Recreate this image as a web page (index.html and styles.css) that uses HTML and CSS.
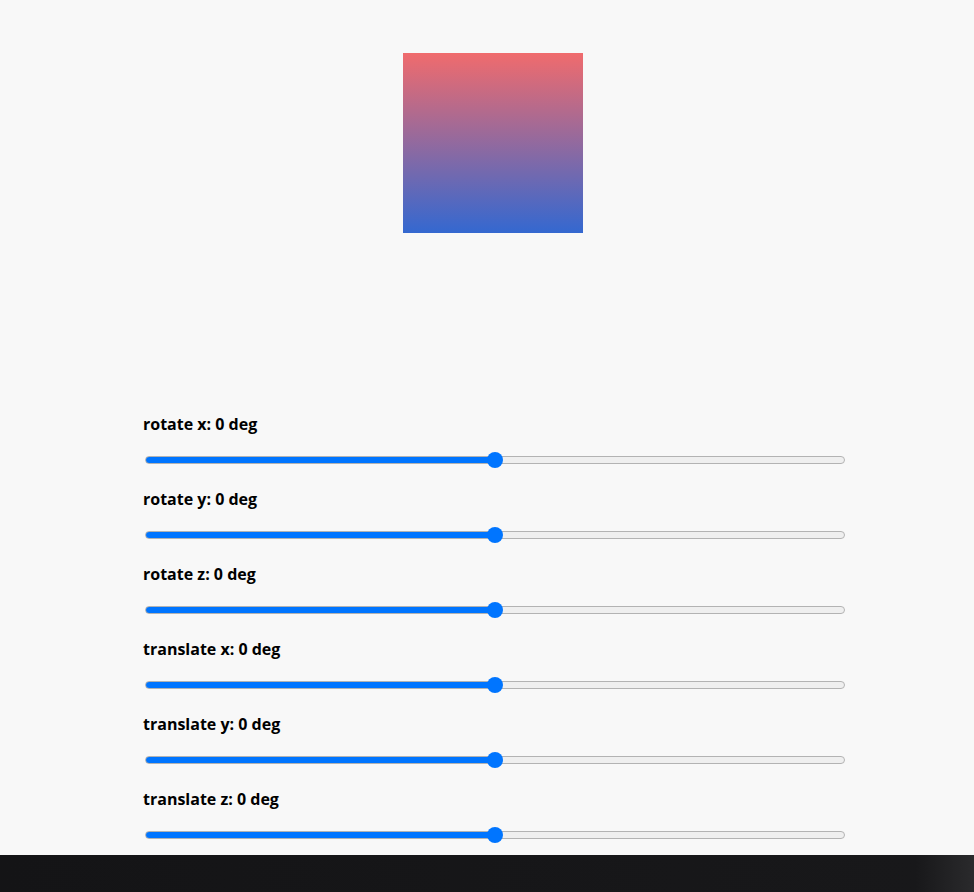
FILE: index.html
```html
<!DOCTYPE html>
<html lang="en">
<head>
<meta charset="utf-8">
<title>3D transform</title>
<link rel="stylesheet" href="styles.css">
</head>
<body>
<main class="page">
  <section class="stage">
    <div class="box"></div>
  </section>
  <section class="controls">
    <div class="control">
      <label class="label" for="rx">rotate x: 0 deg</label>
      <input class="range" id="rx" type="range" min="-180" max="180" value="0" style="--p:50%">
    </div>
    <div class="control">
      <label class="label" for="ry">rotate y: 0 deg</label>
      <input class="range" id="ry" type="range" min="-180" max="180" value="0" style="--p:50%">
    </div>
    <div class="control">
      <label class="label" for="rz">rotate z: 0 deg</label>
      <input class="range" id="rz" type="range" min="-180" max="180" value="0" style="--p:50%">
    </div>
    <div class="control">
      <label class="label" for="tx">translate x: 0 deg</label>
      <input class="range" id="tx" type="range" min="-180" max="180" value="0" style="--p:50%">
    </div>
    <div class="control">
      <label class="label" for="ty">translate y: 0 deg</label>
      <input class="range" id="ty" type="range" min="-180" max="180" value="0" style="--p:50%">
    </div>
    <div class="control">
      <label class="label" for="tz">translate z: 0 deg</label>
      <input class="range" id="tz" type="range" min="-180" max="180" value="0" style="--p:50%">
    </div>
  </section>
</main>
<div class="taskbar"></div>
</body>
</html>
```
FILE: styles.css
```css
html, body {
  margin: 0;
  padding: 0;
  background: #f8f8f8;
}
body {
  font-family: "Open Sans", "Noto Sans", sans-serif;
  color: #000;
}
.page {
  width: 704px;
  margin-left: 143px;
}
.stage {
  height: 415px;
  padding-top: 53px;
  box-sizing: border-box;
  display: flex;
}
.box {
  width: 180px;
  height: 180px;
  margin-left: 260px;
  background: linear-gradient(to bottom, #f06b6d, #3468d0);
}
.controls {
  display: flex;
  flex-direction: column;
}
.control {
  display: flex;
  flex-direction: column;
  height: 75px;
}
.label {
  font-size: 16px;
  font-weight: 700;
  line-height: 18px;
  height: 18px;
}
.range {
  -webkit-appearance: none;
  appearance: none;
  width: 700px;
  height: 8px;
  margin: 23px 2px 0;
  border-radius: 4px;
  border: 1px solid #b3b3b3;
  box-sizing: border-box;
  background: linear-gradient(to right, #0075ff var(--p), #efefef var(--p));
  outline: none;
}
.range::-webkit-slider-thumb {
  -webkit-appearance: none;
  appearance: none;
  width: 16px;
  height: 16px;
  border-radius: 50%;
  background: #0075ff;
  border: none;
}
.taskbar {
  position: fixed;
  left: 0;
  right: 0;
  bottom: 0;
  height: 37px;
  background: linear-gradient(to right, #141416 0%, #18181a 94%, #2a2a2c 100%);
}
```
